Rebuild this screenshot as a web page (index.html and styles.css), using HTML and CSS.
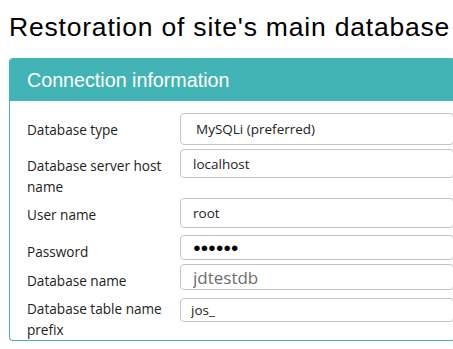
FILE: index.html
```html
<!DOCTYPE html>
<html lang="en">
<head>
  <meta charset="UTF-8"/>
  <title>Restoration of site's main database</title>
  <link rel="stylesheet" href="styles.css">
</head>
<body>
<h1 class="page-title">Restoration of site's main database</h1>

<!-- Connection panel -->
<section class="panel">
  <div class="panel-head">Connection information</div>
  <div class="panel-body">
    <div class="row row-type">
      <label for="dbtype">Database type</label>
      <div class="field field-select" id="dbtype">MySQLi (preferred)</div>
    </div>
    <div class="row row-host">
      <label for="dbhost">Database server host name</label>
      <input class="field" id="dbhost" type="text" value="localhost">
    </div>
    <div class="row row-user">
      <label for="dbuser">User name</label>
      <input class="field" id="dbuser" type="text" value="root">
    </div>
    <div class="row row-pass">
      <label for="dbpass">Password</label>
      <div class="field field-pass" id="dbpass">●●●●●●</div>
    </div>
    <div class="row row-name">
      <label for="dbname">Database name</label>
      <input class="field field-big" id="dbname" type="text" value="jdtestdb">
    </div>
    <div class="row row-prefix">
      <label for="dbprefix">Database table name prefix</label>
      <input class="field" id="dbprefix" type="text" value="jos_">
    </div>
  </div>
</section>
</body>
</html>
```

FILE: styles.css
```css
:root{
  --teal:#42b4b5;
  --text:#222;
  --line:#c4c4c4;
}
*{margin:0;padding:0;box-sizing:border-box}
html,body{overflow:hidden}
body{background:#fff;color:var(--text);font-family:"Open Sans","Noto Sans",sans-serif;padding:13px 0 0 9px}

.page-title{font-family:"Liberation Sans",Arial,sans-serif;font-weight:400;font-size:26.5px;letter-spacing:.8px;line-height:29px;color:#000;margin-bottom:16px}

.panel{width:446px;border:1px solid var(--teal);border-top:none;border-radius:4px;overflow:hidden}
.panel-head{background:var(--teal);color:#fff;height:43px;padding:10px 0 0 17px;font-family:"Liberation Sans",Arial,sans-serif;font-size:19.7px;line-height:24px}
.panel-body{padding:12px 0 0 17px}

.row{display:flex;align-items:flex-start}
.row label{flex:0 0 153px;padding:6px 8px 0 0;font-size:13.6px;line-height:21px}
.field{display:block;width:276px;border:1px solid var(--line);border-radius:4px;background:#fff;padding:0 0 0 12px;font-family:"Open Sans","Noto Sans",sans-serif;font-size:13.5px;color:var(--text);outline:none}

.row-type .field{height:32px;line-height:30px;padding-left:15px}
.row-type{margin-bottom:4px}
.row-host .field{height:29px}
.row-user{margin-top:1px}
.row-user .field{height:30px}
.row-pass{margin-top:7px}
.field-pass{height:25px;line-height:23px;font-size:13px;letter-spacing:-.3px;color:#000}
.row-name{margin-top:2px}
.field-big{height:26px;font-size:17px;color:#6e6e6e}
.row-prefix{margin-top:7px}
.row-prefix label{padding-top:0}
.row-prefix .field{height:24px;padding-left:10px}
```
